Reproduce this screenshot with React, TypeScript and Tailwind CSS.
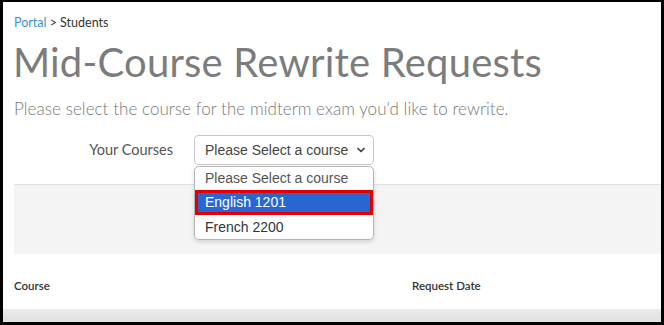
import { ChevronDown } from 'lucide-react';

const ral = { fontFamily: 'Lato, "Open Sans", sans-serif' };

export default function App() {
  return (
    <div className="w-[664px] h-[325px] bg-black pt-[2px] pl-[3px] pr-[3px] pb-[3px]">
      <div className="relative flex h-full flex-col overflow-hidden bg-white" style={ral}>
        {/* Breadcrumb */}
        <div className="pl-[11px] pt-[13px] text-[12.5px] leading-[15px] text-[#333]">
          <span className="text-[#3b8ed0]">Portal</span> &gt; Students
        </div>

        {/* Title */}
        <h1 className="pl-[10px] pt-[8px] text-[40px] font-normal leading-[48px] tracking-[0.2px] text-[#7c7c7c]">
          Mid-Course Rewrite Requests
        </h1>

        <p className="pl-[11px] pt-[13px] text-[17px] font-light leading-[20px] tracking-[0.05px] text-[#777]">
          Please select the course for the midterm exam you'd like to rewrite.
        </p>

        {/* Form row */}
        <div className="relative z-10 flex items-center pl-[11px] pt-[16px]">
          <label className="w-[159px] text-right text-[14.5px] text-[#555]">Your Courses</label>
          <div className="relative ml-[21px]">
            <div
              className="flex h-[30px] w-[180px] items-center justify-between rounded-[4px] border border-[#c8c8c8] bg-white pl-[10px] pr-[6px] text-[14px] text-[#444]"
              style={{ fontFamily: '"Liberation Sans", Arial, sans-serif' }}
            >
              <span>Please Select a course</span>
              <ChevronDown className="h-[12px] w-[12px] text-[#444]" strokeWidth={3.5} />
            </div>

            {/* Open dropdown */}
            <ul
              className="absolute left-0 top-[31px] w-[180px] overflow-hidden rounded-[5px] border border-[#b5b5b5] bg-white text-[14px] shadow-[0_2px_4px_rgba(0,0,0,0.15)]"
              style={{ fontFamily: '"Liberation Sans", Arial, sans-serif' }}
            >
              <li className="flex h-[23px] items-center pl-[10px] text-[#555]">Please Select a course</li>
              <li className="flex h-[25px] items-center border-[3px] border-[#e00000] bg-[#2a66d2] pl-[7px] text-white">
                English 1201
              </li>
              <li className="flex h-[24px] items-center pl-[10px] text-[#333]">French 2200</li>
            </ul>
          </div>
        </div>

        {/* Gray panel */}
        <div className="ml-[11px] mt-[19px] h-[70px] border-t border-[#e2e2e2] bg-[#f4f4f4] pl-[180px] pt-[30px]">
          <div className="h-[22px] w-[90px] rounded-[3px] bg-[#2a66d2]" />
        </div>

        {/* Table header */}
        <div className="flex pl-[11px] pt-[23px] text-[11.5px] font-semibold text-[#333]">
          <div className="w-[398px]">Course</div>
          <div>Request Date</div>
        </div>

        <div className="mt-auto h-[13px] bg-gradient-to-b from-[#ececec] to-[#e0e0e0]" />
      </div>
    </div>
  );
}
